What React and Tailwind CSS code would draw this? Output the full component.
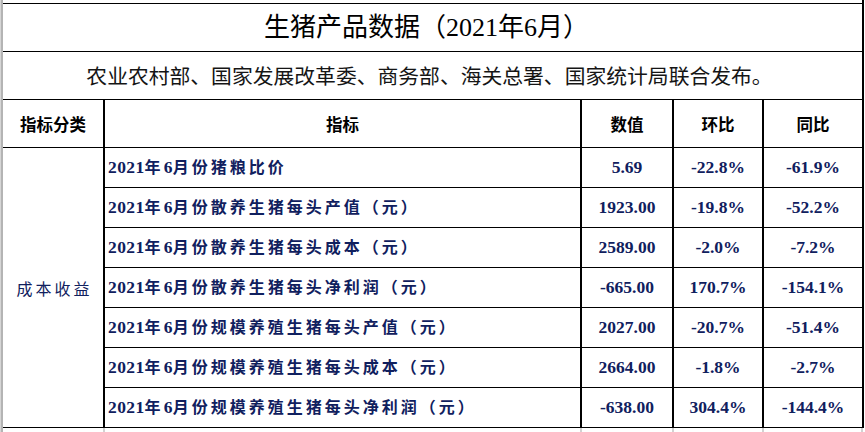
import React from "react";

const NAVY = "text-[#10205e]";

const rows = [
  ["2021年6月份猪粮比价", "5.69", "-22.8%", "-61.9%"],
  ["2021年6月份散养生猪每头产值（元）", "1923.00", "-19.8%", "-52.2%"],
  ["2021年6月份散养生猪每头成本（元）", "2589.00", "-2.0%", "-7.2%"],
  ["2021年6月份散养生猪每头净利润（元）", "-665.00", "170.7%", "-154.1%"],
  ["2021年6月份规模养殖生猪每头产值（元）", "2027.00", "-20.7%", "-51.4%"],
  ["2021年6月份规模养殖生猪每头成本（元）", "2664.00", "-1.8%", "-2.7%"],
  ["2021年6月份规模养殖生猪每头净利润（元）", "-638.00", "304.4%", "-144.4%"],
];

function Label({ text }) {
  const parts = text.split(/(\d+)/).filter((p) => p.length);
  return (
    <span className="whitespace-nowrap">
      {parts.map((p, i) =>
        /^\d+$/.test(p) ? (
          <span key={i} className="text-[17.5px] tracking-[0.4px]">
            {p}
          </span>
        ) : (
          <span key={i} className="text-[16px] tracking-[3px]">
            {p}
          </span>
        )
      )}
    </span>
  );
}

export default function App() {
  const serif = { fontFamily: '"Liberation Serif", "Noto Sans CJK SC", serif' };
  const sans = { fontFamily: '"Noto Sans CJK SC", sans-serif' };
  return (
    <div className="w-[865px] h-[432px] bg-white flex overflow-hidden">
      {/* left grid strip */}
      <div className="w-[3px] shrink-0 flex flex-col border-l border-[#d6d6d6]">
        <div className="flex-1 border-r-2 border-[#b4b4b4] flex flex-col">
          <div className="h-[144px]" />
          <div className="h-[3px] border-y border-[#b4b4b4]" />
        </div>
      </div>
      {/* table */}
      <div className="w-[861px] shrink-0 flex flex-col">
        <div className="border-r-2 border-black flex flex-col h-[428px]">
          <div className="h-[3px]" />
          <div className="h-px bg-black" />
          {/* title */}
          <div
            className="h-[48px] border-b border-black flex items-center justify-center pr-[12px] text-[26px] leading-none text-black"
            style={serif}
          >
            生猪产品数据（2021年6月）
          </div>
          {/* subtitle */}
          <div
            className="h-[48px] border-b border-black flex items-center justify-center pr-[6px] text-[20.8px] leading-none text-[#151515]"
            style={sans}
          >
            农业农村部、国家发展改革委、商务部、海关总署、国家统计局联合发布。
          </div>
          {/* header */}
          <div
            className="h-[48px] border-b border-black grid grid-cols-[102px_477px_92px_90px_98px] text-[16.5px] font-bold text-black leading-none"
            style={sans}
          >
            <div className="border-r-2 border-black flex items-center justify-center pt-[1px]">指标分类</div>
            <div className="border-r-2 border-black flex items-center justify-center pt-[1px]">指标</div>
            <div className="border-r-2 border-black flex items-center justify-center pt-[1px]">数值</div>
            <div className="border-r-2 border-black flex items-center justify-center pt-[1px]">环比</div>
            <div className="flex items-center justify-center pt-[1px]">同比</div>
          </div>
          {/* body */}
          <div className="grid grid-cols-[102px_477px_92px_90px_98px] grid-rows-[repeat(7,40px)]">
            <div
              className={`row-span-7 border-r-2 border-b border-black flex items-center justify-center pl-[3px] text-[16px] tracking-[3px] ${NAVY}`}
              style={sans}
            >
              成本收益
            </div>
            {rows.map((r, i) => (
              <React.Fragment key={i}>
                <div
                  className={`border-r-2 border-b border-black flex items-center pl-[3px] font-bold leading-none ${NAVY}`}
                  style={serif}
                >
                  <Label text={r[0]} />
                </div>
                <div
                  className={`border-r-2 border-b border-black flex items-center justify-center font-bold text-[17.5px] leading-none ${NAVY}`}
                  style={serif}
                >
                  {r[1]}
                </div>
                <div
                  className={`border-r-2 border-b border-black flex items-center justify-center font-bold text-[17.5px] leading-none ${NAVY}`}
                  style={serif}
                >
                  {r[2]}
                </div>
                <div
                  className={`border-b border-black flex items-center justify-center font-bold text-[17.5px] leading-none ${NAVY}`}
                  style={serif}
                >
                  {r[3]}
                </div>
              </React.Fragment>
            ))}
          </div>
        </div>
        {/* gridline stubs below */}
        <div className="h-[4px] grid grid-cols-[102px_477px_92px_90px_99px]">
          <div className="border-r-2 border-[#d2d2d2]" />
          <div className="border-r-2 border-[#d2d2d2]" />
          <div className="border-r-2 border-[#d2d2d2]" />
          <div className="border-r-2 border-[#d2d2d2]" />
          <div className="border-r-2 border-[#d2d2d2]" />
        </div>
      </div>
    </div>
  );
}
